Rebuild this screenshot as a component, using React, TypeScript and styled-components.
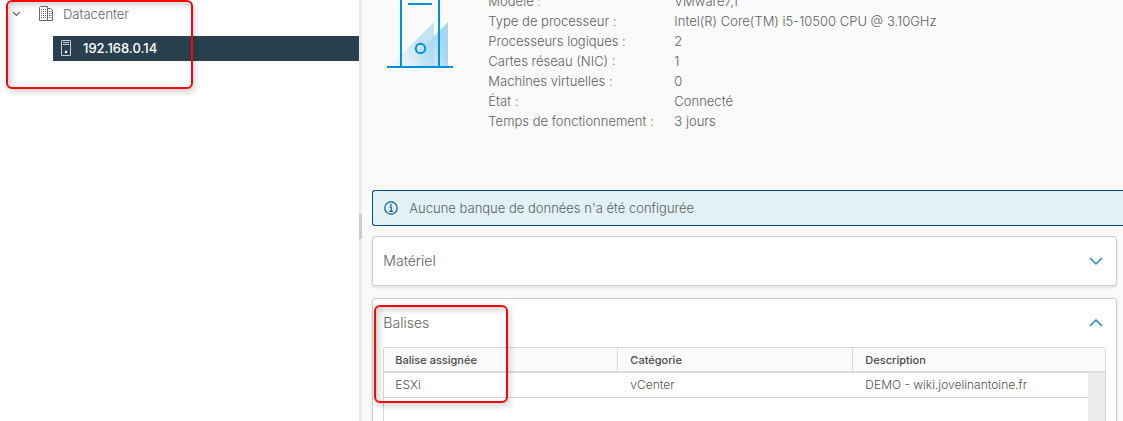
import React from 'react';
import styled, { createGlobalStyle, css } from 'styled-components';

const GlobalStyle = createGlobalStyle`
  *, *::before, *::after { box-sizing: border-box; }
  body {
    margin: 0;
    background: #fafafa;
    color: #606060;
    font: 300 13px/20px Inter, "Open Sans", sans-serif;
  }
`;

const Shell = styled.div`
  display: flex;
  height: 100vh;
  overflow: hidden;
`;

const Sidebar = styled.nav`
  position: relative;
  flex: 0 0 32%;
  background: #fff;
`;

const Splitter = styled.div`
  flex: 0 0 3px;
  display: flex;
  align-items: center;
  background: #ebebeb;
  padding-top: 32px;
`;

const SplitterHandle = styled.div`
  width: 3px;
  height: 25px;
  background: #ccc;
`;

const Tree = styled.ul`
  list-style: none;
  margin: 0;
  padding: 0;
`;

const TreeRow = styled.a<{ $selected?: boolean }>`
  display: flex;
  align-items: center;
  height: 25px;
  color: #606060;
  text-decoration: none;
  ${({ $selected }) =>
    $selected
      ? css`
          margin: 10px 0 0 53px;
          padding: 0 0 2px 8px;
          gap: 12px;
          background: #29414e;
          color: #fff;
          font-weight: 500;
        `
      : css`
          margin-top: 1px;
          padding-left: 12px;
          gap: 10px;
        `}
`;

const TreeCaret = styled.svg`
  margin-right: 8px;
`;

const Highlight = styled.div<{ $left: number; $top: number; $width: number; $height: number }>`
  position: absolute;
  left: ${({ $left }) => $left}px;
  top: ${({ $top }) => $top}px;
  width: ${({ $width }) => $width}px;
  height: ${({ $height }) => $height}px;
  border: 2px solid #fa0508;
  border-radius: 6px;
  box-shadow: 2px 3px 6px rgba(0, 0, 0, 0.18), inset 3px 3px 6px rgba(0, 0, 0, 0.18);
  pointer-events: none;
`;

const Main = styled.main`
  flex: 1;
  min-width: 0;
  display: flex;
  flex-direction: column;
  padding-left: 10px;
`;

const Summary = styled.section`
  display: flex;
  gap: 35px;
  padding: 0 0 59px 15px;
`;

const Facts = styled.dl`
  display: grid;
  grid-template-columns: 186px 1fr;
  flex: 1;
  margin: -9px 0 0;
  dt, dd { margin: 0; white-space: nowrap; }
`;

const Alert = styled.div`
  display: flex;
  align-items: center;
  gap: 11px;
  flex: none;
  height: 36px;
  padding-left: 11px;
  border: 1px solid #004b8a;
  border-right: 0;
  border-radius: 3px 0 0 3px;
  background: #e1f1f6;
`;

const Card = styled.section`
  position: relative;
  flex: none;
  margin: 10px 6px 0 0;
  padding: 0 10px;
  border: 1px solid #ccc;
  border-radius: 3px;
  background: #fff;
  box-shadow: 0 2px 3px rgba(0, 0, 0, 0.1);
  & + & { margin-top: 12px; }
`;

const CardHeader = styled.button`
  display: flex;
  align-items: center;
  justify-content: space-between;
  width: 100%;
  height: 48px;
  padding: 0 2px 0 0;
  border: 0;
  background: none;
  color: #606060;
  font: inherit;
  font-size: 14px;
`;

const TagTable = styled.table`
  width: 100%;
  table-layout: fixed;
  border-collapse: separate;
  border-spacing: 0;
  border: 1px solid #d6d6d6;
  border-radius: 3px 3px 0 0;
  color: #505050;
  th, td { text-align: left; padding: 0 11px; }
  th {
    height: 25px;
    background: #fafafa;
    border-bottom: 2px solid #dcdcdc;
    font-size: 11px;
    font-weight: 500;
    color: #4a4a4a;
  }
  th + th { border-left: 1px solid #d6d6d6; padding-left: 12px; }
  td + td { padding-left: 13px; }
  td { height: 25px; border-bottom: 1px solid #d6d6d6; font-size: 12px; line-height: 16px; }
`;

const NameCol = styled.col`
  width: 233px;
`;

const CategoryCol = styled.col`
  width: 235px;
`;

const GutterCol = styled.col`
  width: 17px;
`;

const Gutter = styled.td`
  && { padding: 0; background: #ebebeb; }
`;

const Blank = styled.td`
  && { height: 60px; }
`;

const Chevron = ({ up }: { up?: boolean }) => (
  <svg width="16" height="10" viewBox="0 0 16 10" fill="none" stroke="#1e88c3" strokeWidth="1.5" aria-hidden="true">
    <path d={up ? 'M2 8l6-6 6 6' : 'M2 2l6 6 6-6'} />
  </svg>
);

const BuildingIcon = () => (
  <svg width="14" height="16" viewBox="0 0 14 16" fill="none" stroke="#666" aria-hidden="true">
    <path d="M.5 14.5V1.5l1-1h7v14zM8.500 2.500h3l2 2v10h-5" />
    <path d="M2.5 3v10M4.5 3v10M6.5 3v10M10.5 5v8M12 5v8" strokeDasharray="1 1" />
  </svg>
);

const HostIcon = () => (
  <svg width="10" height="16" viewBox="0 0 10 16" fill="none" stroke="#c9d1d5" aria-hidden="true">
    <rect x=".5" y=".5" width="9" height="15" rx=".5" />
    <path d="M2 2.500h6M2 4.500h6" />
    <circle cx="5" cy="12" r="1.300" fill="#fff" stroke="none" />
  </svg>
);

const InfoIcon = () => (
  <svg width="14" height="14" viewBox="0 0 14 14" fill="none" stroke="#0a5a96" strokeWidth="1.2" aria-hidden="true">
    <circle cx="7" cy="7" r="6.2" />
    <path d="M5.3 6h1.9v4M5.2 10.3h3.8" />
    <circle cx="7" cy="3.9" r=".9" fill="#0a5a96" stroke="none" />
  </svg>
);

const HostDrawing = () => (
  <svg width="66" height="68" viewBox="0 0 66 68" fill="none" stroke="#0092d8" strokeWidth="2" aria-hidden="true">
    <defs>
      <linearGradient id="front" x1="0" y1="1" x2="1" y2="0.3">
        <stop offset="0" stopColor="#c5e3f3" stopOpacity="0" />
        <stop offset="0.7" stopColor="#c5e3f3" />
      </linearGradient>
      <linearGradient id="back" x1="0" y1="0.8" x2="1" y2="0.5">
        <stop offset="0.2" stopColor="#a4d7f0" stopOpacity="0" />
        <stop offset="0.9" stopColor="#a4d7f0" />
      </linearGradient>
    </defs>
    <path d="M3 66L47 22V66z" fill="url(#front)" stroke="none" />
    <path d="M17 66L61 22V66z" fill="url(#back)" stroke="none" />
    <path d="M14 0V66M52 0V66M21 4H45M0 67H66" />
    <circle cx="33.500" cy="48.500" r="4.700" />
  </svg>
);

const facts: [string, string][] = [
  ['Modèle :', 'VMware7,1'],
  ['Type de processeur :', 'Intel(R) Core(TM) i5-10500 CPU @ 3.10GHz'],
  ['Processeurs logiques :', '2'],
  ['Cartes réseau (NIC) :', '1'],
  ['Machines virtuelles :', '0'],
  ['État :', 'Connecté'],
  ['Temps de fonctionnement :', '3 jours'],
];

export default function App() {
  return (
    <Shell>
      <GlobalStyle />
      <Sidebar>
        <Tree>
          <li>
            <TreeRow href="#datacenter">
              <TreeCaret width="9" height="6" viewBox="0 0 9 6" fill="none" stroke="#666" strokeWidth="1.2" aria-hidden="true">
                <path d="M1 1l3.500 3.500L8 1" />
              </TreeCaret>
              <BuildingIcon />
              Datacenter
            </TreeRow>
            <Tree>
              <li>
                <TreeRow href="#host" $selected>
                  <HostIcon />
                  192.168.0.14
                </TreeRow>
              </li>
            </Tree>
          </li>
        </Tree>
        <Highlight $left={6} $top={0} $width={187} $height={89} />
      </Sidebar>
      <Splitter>
        <SplitterHandle />
      </Splitter>
      <Main>
        <Summary>
          <HostDrawing />
          <Facts>
            {facts.map(([label, value]) => (
              <React.Fragment key={label}>
                <dt>{label}</dt>
                <dd>{value}</dd>
              </React.Fragment>
            ))}
          </Facts>
        </Summary>
        <Alert role="status">
          <InfoIcon />
          Aucune banque de données n'a été configurée
        </Alert>
        <Card>
          <CardHeader type="button" aria-expanded="false">
            Matériel
            <Chevron />
          </CardHeader>
        </Card>
        <Card>
          <CardHeader type="button" aria-expanded="true">
            Balises
            <Chevron up />
          </CardHeader>
          <TagTable>
            <colgroup>
              <NameCol />
              <CategoryCol />
              <col />
              <GutterCol />
            </colgroup>
            <thead>
              <tr>
                <th>Balise assignée</th>
                <th>Catégorie</th>
                <th colSpan={2}>Description</th>
              </tr>
            </thead>
            <tbody>
              <tr>
                <td>ESXi</td>
                <td>vCenter</td>
                <td>DEMO - wiki.jovelinantoine.fr</td>
                <Gutter rowSpan={2} />
              </tr>
              <tr>
                <Blank colSpan={3} />
              </tr>
            </tbody>
          </TagTable>
          <Highlight $left={1} $top={6} $width={134} $height={98} />
        </Card>
      </Main>
    </Shell>
  );
}
